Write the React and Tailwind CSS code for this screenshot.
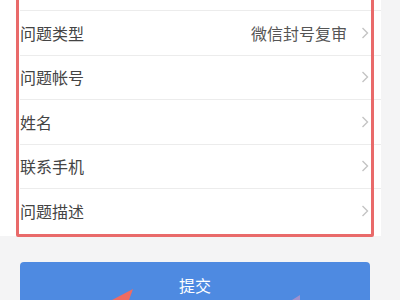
import React from "react";

const rows = [
  { label: "问题类型", value: "微信封号复审" },
  { label: "问题帐号" },
  { label: "姓名" },
  { label: "联系手机" },
  { label: "问题描述" },
];

const Chevron = () => (
  <svg width="8" height="12" viewBox="0 0 8 12" className="shrink-0">
    <polyline
      points="1.5,1 6.5,6 1.5,11"
      fill="none"
      stroke="#c4c4c4"
      strokeWidth="1.4"
    />
  </svg>
);

const Row = ({ label, value }) => (
  <div className="ml-[20px] h-[44.5px] border-t border-[#ececec] flex items-center pr-[12px]">
    <span className="text-[16px] text-[#444]">{label}</span>
    <span className="ml-auto text-[16px] text-[#555] mr-[14px]">{value}</span>
    <Chevron />
  </div>
);

export default function App() {
  return (
    <div
      className="relative w-[400px] h-[300px] overflow-hidden bg-[#f4f4f5]"
      style={{ fontFamily: '"Noto Sans CJK SC", "Noto Sans", sans-serif' }}
    >
      <div className="w-[381px] bg-white pt-[10px] pb-[3px]">
        {rows.map((r, i) => (
          <Row key={i} label={r.label} value={r.value} />
        ))}
      </div>

      <div className="mt-[26px] ml-[20px] w-[350px] h-[46px] rounded-[4px] bg-[#4e8ae1] flex items-center justify-center">
        <span className="text-[16px] text-white">提交</span>
      </div>

      {/* red annotation box */}
      <div className="absolute left-[16px] top-[-10px] w-[358px] h-[247px] border-[3.5px] border-[#e96a6a] rounded-[2px] pointer-events-none" />

      {/* arrow heads */}
      <svg className="absolute left-0 top-0" width="400" height="300">
        <polygon points="133,289 112,300 129,300" fill="#ef6b62" />
        <polygon points="300,295 292,300 300,300" fill="#d996c0" opacity="0.6" />
      </svg>
    </div>
  );
}
